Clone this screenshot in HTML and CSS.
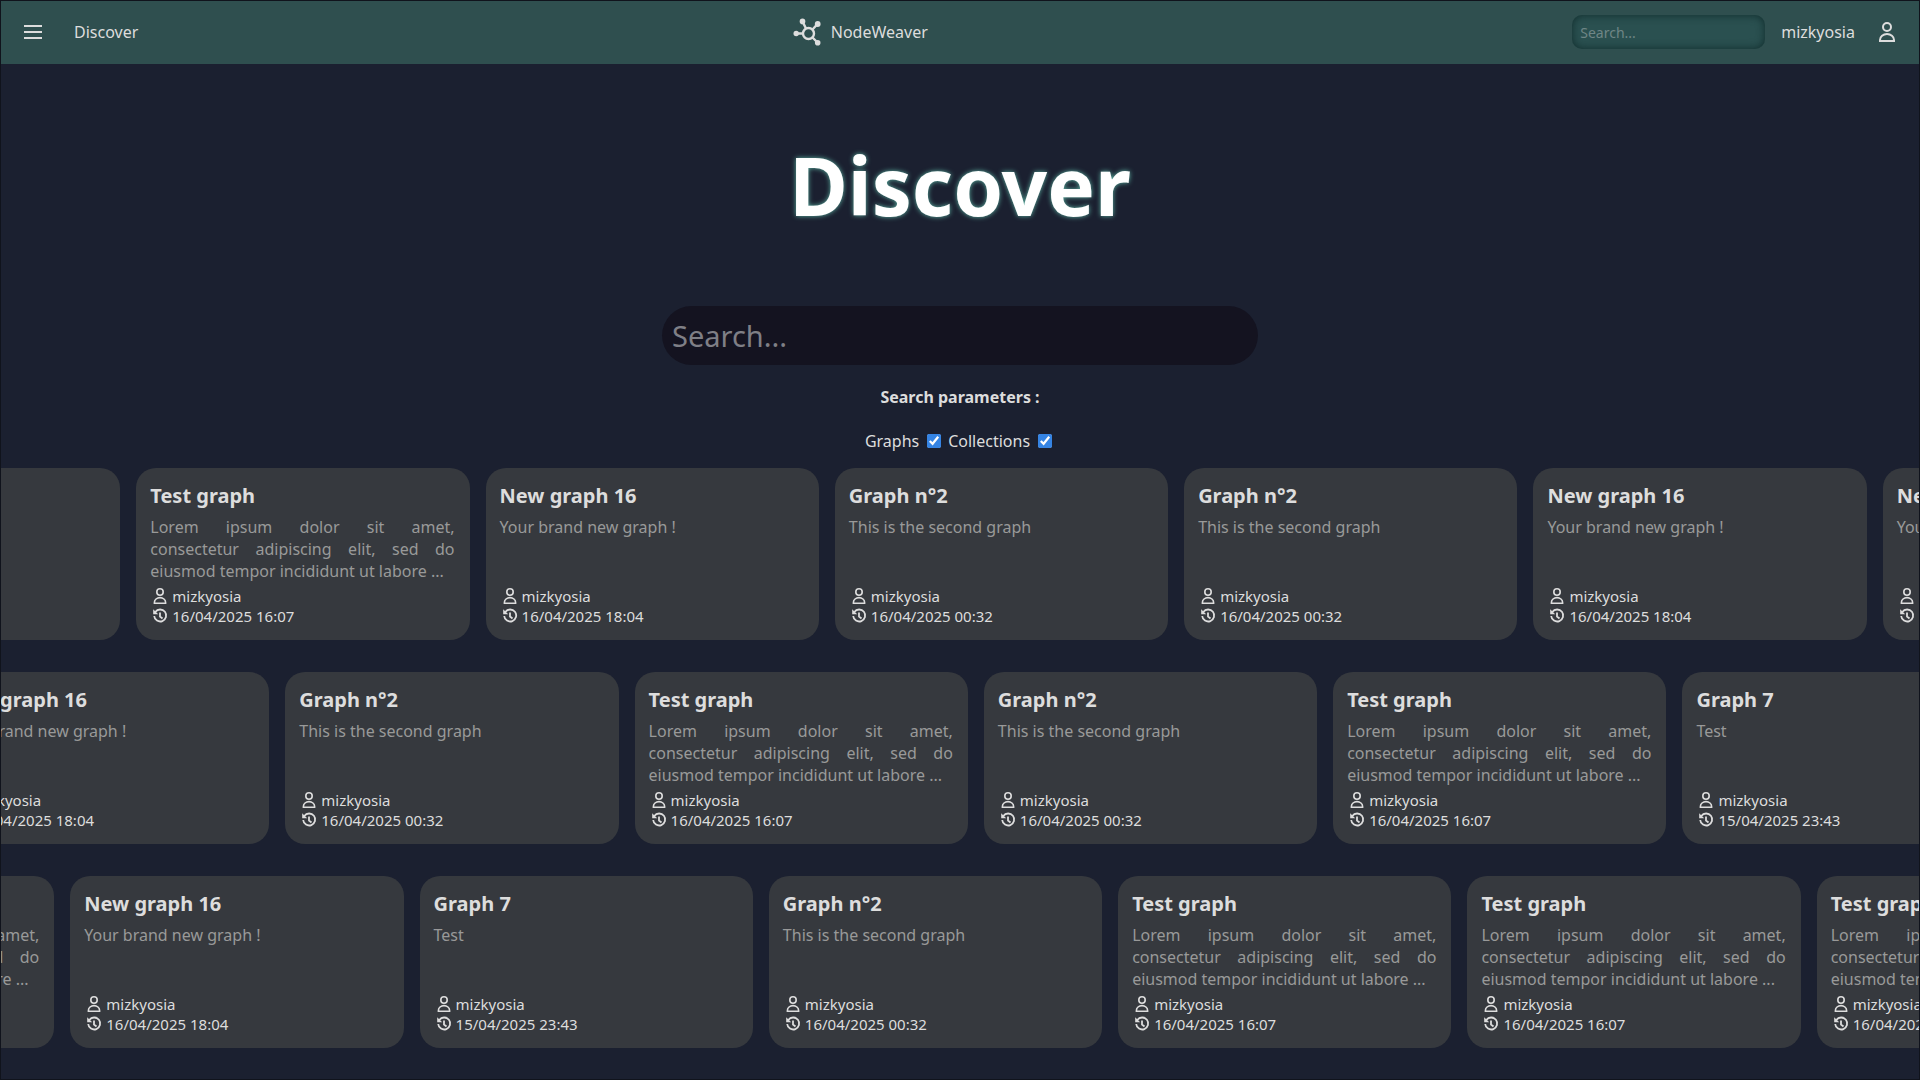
FILE: index.html
```html
<!DOCTYPE html>
<html lang="en">
<head>
<meta charset="utf-8">
<title>NodeWeaver - Discover</title>
<meta name="viewport" content="width=device-width, initial-scale=1">
<link rel="stylesheet" href="styles.css">
</head>
<body>
<svg class="sprite" aria-hidden="true">
  <symbol id="user" viewBox="0 0 16 20">
    <g fill="none" stroke="currentColor" stroke-width="2"><circle cx="8" cy="5" r="4"/><path d="M1 19v-1a7 6 0 0 1 14 0V19z"/></g>
  </symbol>
  <symbol id="clock" viewBox="0 0 16 16">
    <g fill="none" stroke="currentColor" stroke-width="1.800"><path d="M3.300 4A6 6 0 1 1 2.200 8M8 4.500v4l2.500 2"/></g>
    <path d="M1.200 1.300v5h5z" fill="currentColor"/>
  </symbol>
</svg>
<header class="topbar">
  <div class="topbar-left">
    <button class="icon-button" type="button" aria-label="Menu"><svg width="18" height="14" viewBox="0 0 18 14"><path d="M0 1h18M0 7h18M0 13h18" stroke="currentColor" stroke-width="2"/></svg></button>
    <a href="#">Discover</a>
  </div>
  <a class="brand" href="#"><svg width="28" height="28" viewBox="0 0 28 28"><g fill="none" stroke="currentColor" stroke-width="2.400"><circle cx="15.500" cy="15.500" r="5.500"/><path d="M3.500 15.500h6.500M9.500 3.500l3.500 7M24.500 6l-5 5.500M24.500 24.500l-5-5"/></g><g fill="currentColor"><circle cx="3.200" cy="15.500" r="2.700"/><circle cx="9.500" cy="3.400" r="2.800"/><circle cx="24.700" cy="6" r="2.900"/><circle cx="24.700" cy="24.800" r="2.800"/></g></svg>NodeWeaver</a>
  <div class="topbar-right">
    <input class="topbar-search" type="search" placeholder="Search..." aria-label="Quick search">
    <a href="#">mizkyosia</a>
    <button class="icon-button" type="button" aria-label="Account"><svg width="16" height="20"><use href="#user"/></svg></button>
  </div>
</header>
<main>
  <h1>Discover</h1>
  <form class="search">
    <input class="search-box" type="search" placeholder="Search..." aria-label="Search">
    <fieldset>
      <legend>Search parameters :</legend>
      <div class="options">
      <label for="graphs">Graphs</label><input id="graphs" type="checkbox" checked>
      <label for="collections">Collections</label><input id="collections" type="checkbox" checked>
      </div>
    </fieldset>
  </form>
  <div class="rows" id="rows"></div>
</main>
<script src="script.js"></script>
</body>
</html>
```
FILE: styles.css
```css
* { box-sizing: border-box; }
body {
  margin: 0;
  min-height: 100vh;
  border: 1px solid #10131c;
  overflow-x: hidden;
  background: #1b2030;
  color: #ddd;
  font: 16px/22px "Noto Sans", sans-serif;
}
a { color: inherit; text-decoration: none; }
input { font-family: inherit; }
svg { display: block; }
.sprite { display: none; }
.topbar {
  display: flex;
  justify-content: space-between;
  align-items: center;
  height: 63px;
  padding: 0 24px 1px 23px;
  background: #2f4f4f;
}
.topbar-left, .topbar-right, .brand { display: flex; align-items: center; }
.topbar-left { gap: 32px; padding-right: 10px; }
.topbar-right { gap: 16px; }
.topbar-right .icon-button { margin-left: 8px; }
.brand { gap: 10px; }
.icon-button { padding: 0; border: 0; background: none; color: inherit; }
.topbar-search {
  width: 193px;
  height: 34px;
  padding: 0 8px;
  border: 0;
  border-radius: 10px;
  background: #2a5050;
  box-shadow: inset 0 0 8px #102c2c;
  color: inherit;
  font-size: 14px;
}
.topbar-search::placeholder { color: #6f8686; }
h1 {
  margin: 64px 0;
  color: #fff;
  font-size: 80px;
  line-height: 114px;
  text-align: center;
  text-shadow: 0 0 5px #5fb5a5;
}
.search { display: flex; flex-direction: column; align-items: center; }
.search-box {
  width: 596px;
  max-width: 90%;
  height: 59px;
  padding: 0 10px;
  border: 0;
  border-radius: 30px;
  background: #141320;
  color: inherit;
  font-size: 29px;
}
.search-box::placeholder { color: #7f7f86; }
fieldset { margin: 0; padding: 21px 0 16px; border: 0; text-align: center; }
legend { float: left; width: 100%; margin-bottom: 22px; padding: 0; font-weight: 700; }
.options { display: flex; clear: both; align-items: center; justify-content: center; }
.options input { width: 14px; height: 14px; margin: 0 7px 0 8px; accent-color: #3584e4; }
.options input:last-child { margin-right: 3px; }
.rows { display: grid; gap: 32px; padding-bottom: 31px; overflow: hidden; }
.row { display: flex; gap: 16px; }
.row-1 { margin-left: -214px; }
.row-2 { margin-left: -65px; }
.row-3 { margin-left: -280px; }
.card {
  display: flex;
  flex: none;
  flex-direction: column;
  width: calc((100vw + 413px) / 7);
  height: 172px;
  padding: 14px 15px 14px 14px;
  border-radius: 20px;
  background: #36393e;
}
.card h2 { margin: 0 0 7px; font-size: 20px; line-height: 27px; }
.card p { margin: 0; color: #999; text-align: justify; }
.meta { display: grid; margin-top: auto; font-size: 15px; line-height: 20px; }
.meta span { display: grid; grid-template-columns: 16px auto; gap: 4px; align-items: center; justify-content: start; padding-left: 2px; }
```
FILE: script.js
```js
const LOREM = "Lorem ipsum dolor sit amet, consectetur adipiscing elit, sed do eiusmod tempor incididunt ut labore ...";
const graphs = {
  test: ["Test graph", LOREM, "16/04/2025 16:07"],
  new: ["New graph 16", "Your brand new graph !", "16/04/2025 18:04"],
  second: ["Graph n°2", "This is the second graph", "16/04/2025 00:32"],
  seven: ["Graph 7", "Test", "15/04/2025 23:43"],
};
const rows = [
  ["seven", "test", "new", "second", "second", "new", "new"],
  ["new", "second", "test", "second", "test", "seven"],
  ["test", "new", "seven", "second", "test", "test", "test"],
];
const card = ([title, text, date]) => `<article class="card"><h2>${title}</h2><p>${text}</p><div class="meta">
<span><svg width="16" height="16"><use href="#user"/></svg>mizkyosia</span>
<span><svg width="16" height="16"><use href="#clock"/></svg>${date}</span></div></article>`;
document.getElementById("rows").innerHTML = rows
  .map((row, i) => `<section class="row row-${i + 1}">${row.map(k => card(graphs[k])).join("")}</section>`)
  .join("");
```
